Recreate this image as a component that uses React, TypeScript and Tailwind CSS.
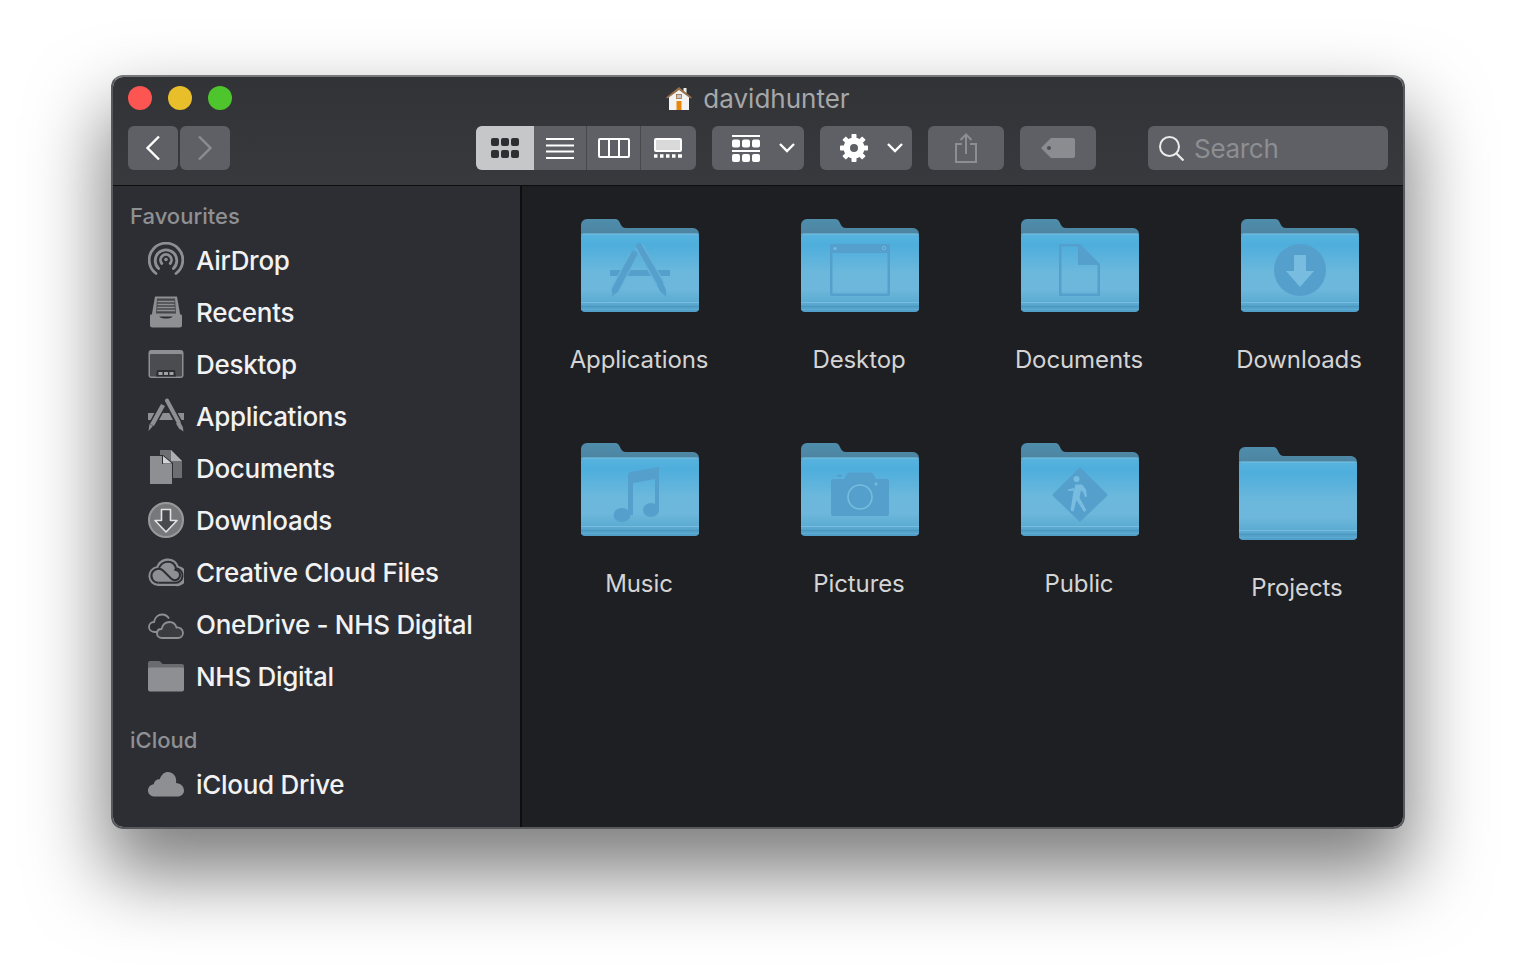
import { useId } from "react";
import type { ReactNode } from "react";

const gray = "#8e8f92";

function AirDropIcon() {
  return (
    <svg viewBox="0 0 36 36" className="w-9 h-9" fill="none" stroke={gray}>
      <path d="M8 31.500A16.800 16.800 0 1 1 28 31.500" strokeWidth="2.800" strokeLinecap="round" />
      <path d="M10.600 26.500A10.800 10.800 0 1 1 25.400 26.500" strokeWidth="2.800" strokeLinecap="round" />
      <path d="M13.800 21.500A5.500 5.500 0 1 1 22.200 21.500" strokeWidth="2.800" strokeLinecap="round" />
      <circle cx="18" cy="17.500" r="1.800" fill={gray} stroke="none" />
    </svg>
  );
}

function RecentsIcon() {
  return (
    <svg viewBox="0 0 36 36" className="w-9 h-9">
      <path d="M7 2.500h22l3.500 20H3.500z" fill={gray} />
      <path d="M9 4.500h18l1 15H8z" fill="#46474b" />
      <path d="M9.500 7.500h17M9.500 10.500h17M9.200 13.500h17.600M9 16.500h18" stroke={gray} strokeWidth="1.600" />
      <path d="M2 21.500a1 1 0 0 1 1-1h7.500c1 3 2.500 4 7.500 4s6.500-1 7.500-4H33a1 1 0 0 1 1 1V31a2.500 2.500 0 0 1-2.500 2.500h-27A2.500 2.500 0 0 1 2 31z" fill={gray} />
    </svg>
  );
}

function DesktopIcon() {
  return (
    <svg viewBox="0 0 36 36" className="w-9 h-9">
      <rect x="0.500" y="4" width="35" height="28" rx="3" fill={gray} />
      <rect x="2" y="8" width="32" height="22.500" rx="1" fill="#4b4c50" />
      <path d="M8 30.500l1-6.500h18l1 6.500z" fill="#2c2d31" />
      <rect x="10.500" y="26" width="4" height="3" fill="#a0a1a4" />
      <rect x="16" y="26" width="4" height="3" fill="#a0a1a4" />
      <rect x="21.500" y="26" width="4" height="3" fill="#a0a1a4" />
    </svg>
  );
}

function ApplicationsIcon() {
  return (
    <svg viewBox="0 0 36 36" className="w-9 h-9" fill="none">
      <path d="M0 15h36v7H0z" fill={gray} />
      <path d="M15 7L3 29" stroke="#2d2e33" strokeWidth="7.500" />
      <path d="M19 3l14 26" stroke="#2d2e33" strokeWidth="7.500" />
      <path d="M15 7L4 27" stroke={gray} strokeWidth="4.500" />
      <path d="M1.500 26l3.500 2-4.500 5z" fill={gray} />
      <path d="M19 2.500L30.500 24" stroke={gray} strokeWidth="4" strokeLinecap="round" />
      <path d="M28 25.500l3.800-2 3 5.500.700 4.500-4.500-3z" fill={gray} />
    </svg>
  );
}

function DocumentsIcon() {
  return (
    <svg viewBox="0 0 36 36" className="w-9 h-9">
      <path d="M12 0h11l11 11v17H25V13L15 5h-3z" fill="#6d6e72" />
      <path d="M23 0l11 11H23z" fill="#aeafb1" />
      <path d="M2 6h12v8h10v20H2z" fill={gray} />
      <path d="M15 6l9 7.500h-9z" fill="#d2d2d3" />
    </svg>
  );
}

function DownloadsIcon() {
  return (
    <svg viewBox="0 0 36 36" className="w-9 h-9">
      <circle cx="18" cy="18" r="17" fill="#77787b" stroke="#98999b" strokeWidth="2" />
      <path d="M13.500 7.500h9v11h6.500L18 30 7 18.500h6.500z" fill="#48494d" stroke="#e3e3e4" strokeWidth="1.600" strokeLinejoin="round" />
    </svg>
  );
}

function CreativeCloudIcon() {
  return (
    <svg viewBox="0 0 36 36" className="w-9 h-9" fill="none">
      <path d="M10 32a10 10 0 0 1-1.500-19.800C10.500 7 15 4.500 20 4.500c5 0 9 2.800 10.500 7.500A10 10 0 0 1 27 32z" fill={gray} />
      <path d="M10.500 28.800a7 7 0 1 1 4.800-12l8 8a5.200 5.200 0 1 0 3-9" stroke="#2d2e33" strokeWidth="2" />
      <path d="M11 13.800C13 9.800 16 7.800 20 7.800c4 0 7 2.500 8 6.500a7.200 7.200 0 0 1-1.500 14.500H10.500" stroke="#2d2e33" strokeWidth="2" />
    </svg>
  );
}

function OneDriveIcon() {
  return (
    <svg viewBox="0 0 36 36" className="w-9 h-9" fill="none" stroke={gray} strokeWidth="1.800">
      <path d="M11 26H6.500C3 26 1 23.500 1 21c0-3 2.300-5 5-5 .8-5 4.500-7.500 8-7.500 3 0 5.500 1.500 7 4" />
      <path d="M14 32c-3 0-5-2-5-4.500 0-2.800 2-4.500 4.500-4.500C14.500 19 17.500 16 21.500 16c3.500 0 6 2 7 5.500 3.500-.5 6.500 2 6.500 5.300 0 3-2.300 5.200-5 5.200z" fill="#3b3c40" />
    </svg>
  );
}

function SidebarFolderIcon() {
  return (
    <svg viewBox="0 0 36 36" className="w-9 h-9">
      <path d="M0 5a2 2 0 0 1 2-2h9c2 0 2.500 3 4 3h19a2 2 0 0 1 2 2v3H0z" fill="#6a6b6f" />
      <path d="M0 11a1.500 1.500 0 0 1 1.500-1.500h33A1.500 1.500 0 0 1 36 11v20.500a2 2 0 0 1-2 2H2a2 2 0 0 1-2-2z" fill={gray} />
    </svg>
  );
}

function CloudIcon() {
  return (
    <svg viewBox="0 0 36 36" className="w-9 h-9">
      <path d="M6.500 30.500C3 30.500 0 28 0 24.500c0-3.300 2.400-6 5.700-6.300C6.500 14.500 9 13 11.800 13.300 13.300 8.500 16.500 6 20 6c4.600 0 8 3.600 8.200 8.500 0 1-.1 1.700-.2 2.500 4.400.3 8 3.200 8 7.500 0 3.500-2.800 6-6.500 6z" fill={gray} />
    </svg>
  );
}

function Folder({ children }: { children?: ReactNode }) {
  const id = useId();
  return (
    <svg viewBox="0 0 118 94" className="w-[118px] h-[94px]">
      <defs>
        <linearGradient id={`${id}b`} x1="0" y1="0" x2="0" y2="1">
          <stop offset="0" stopColor="#4f8dab" />
          <stop offset="1" stopColor="#4a7f9b" />
        </linearGradient>
        <linearGradient id={`${id}f`} x1="0" y1="0" x2="0" y2="1">
          <stop offset="0" stopColor="#58b3de" />
          <stop offset="0.14" stopColor="#4eaedc" />
          <stop offset="0.5" stopColor="#6cb8dc" />
          <stop offset="0.72" stopColor="#6cb7db" />
          <stop offset="0.86" stopColor="#5dacd3" />
          <stop offset="1" stopColor="#509fc9" />
        </linearGradient>
      </defs>
      <path d="M0 6a6 6 0 0 1 6-6h28c3 0 4 2 5 4 1 3 3 5 6 5h67a6 6 0 0 1 6 6v10H0z" fill={`url(#${id}b)`} />
      <rect x="0" y="15" width="118" height="78" rx="4" fill={`url(#${id}f)`} />
      <path d="M0 16a4 4 0 0 1 4-1h110a4 4 0 0 1 4 1" stroke="#7cc4e6" fill="none" strokeWidth="1" />
      <path d="M0 83.500h118" stroke="#79bcdd" strokeWidth="1" />
      <path d="M0 87.500h118" stroke="#4b97c0" strokeWidth="1.500" />
      <path d="M0 90.500h118" stroke="#5ca9d2" strokeWidth="1" />
      {children}
    </svg>
  );
}

const glyph = "#559fcd";
const glyphLight = "#78bde0";

const folders: { name: string; glyph?: ReactNode }[] = [
  {
    name: "Applications",
    glyph: (
      <g>
        <rect x="29" y="51" width="60" height="6" fill={glyph} />
        <path d="M53 35L34 71" stroke="#64b3da" strokeWidth="9" />
        <path d="M58 27l22 39" stroke="#64b3da" strokeWidth="9" />
        <path d="M53 35L34 71" stroke={glyph} strokeWidth="6.500" strokeLinecap="round" />
        <path d="M31 78l.500-9 5.500 3z" fill={glyph} />
        <path d="M58 27l21 37" stroke={glyph} strokeWidth="6" strokeLinecap="round" />
        <path d="M76 66l5.500-3 3.500 8 .500 7-6-5z" fill={glyph} />
      </g>
    ),
  },
  {
    name: "Desktop",
    glyph: (
      <g>
        <path d="M31 25h56a2 2 0 0 1 2 2v48a2 2 0 0 1-2 2H31a2 2 0 0 1-2-2V27a2 2 0 0 1 2-2zM31.500 34v40.500h55V34z" fill={glyph} fillRule="evenodd" />
        <circle cx="34" cy="29.500" r="1.600" fill={glyphLight} />
        <circle cx="83" cy="29" r="1.700" fill="none" stroke={glyphLight} strokeWidth="0.800" />
      </g>
    ),
  },
  {
    name: "Documents",
    glyph: (
      <g>
        <path d="M38 25h21l20 20v32H38zM40.500 27.500v47h36V46H57V27.500z" fill={glyph} fillRule="evenodd" />
        <path d="M59 27l18 17H59z" fill={glyph} />
      </g>
    ),
  },
  {
    name: "Downloads",
    glyph: (
      <g>
        <circle cx="59" cy="51" r="26" fill={glyph} />
        <path d="M53 36h12v16h8L59 68 45 52h8z" fill={glyphLight} />
      </g>
    ),
  },
  {
    name: "Music",
    glyph: (
      <g fill={glyph}>
        <path d="M47 32a3 3 0 0 1 2.500-3L77 24a1 1 0 0 1 1 1v42h-4V36l-22 4v32h-5z" />
        <ellipse cx="41" cy="72" rx="8.500" ry="7" />
        <ellipse cx="70" cy="67" rx="8" ry="7" />
      </g>
    ),
  },
  {
    name: "Pictures",
    glyph: (
      <g>
        <path d="M32 36h11l3-5a3 3 0 0 1 2.500-1.500h21A3 3 0 0 1 72 31l3 5h11a2 2 0 0 1 2 2v33a2 2 0 0 1-2 2H32a2 2 0 0 1-2-2V38a2 2 0 0 1 2-2z" fill={glyph} />
        <rect x="36" y="31.500" width="5" height="2.500" rx="1" fill={glyph} />
        <circle cx="59" cy="54" r="12" fill="none" stroke={glyphLight} strokeWidth="1.600" />
        <circle cx="75" cy="41" r="1.500" fill={glyphLight} />
      </g>
    ),
  },
  {
    name: "Public",
    glyph: (
      <g>
        <path d="M59 24l27 27a1.500 1.500 0 0 1 0 2L59 79 32 53a1.500 1.500 0 0 1 0-2z" fill={glyph} />
        <circle cx="55.500" cy="36" r="3" fill={glyphLight} />
        <path d="M47 48l6-.5 1.500-6h6.500l4 5 1 7-2 .5-2-5-2-1.500-1.500 7 7 13-2.500 1.500-7.500-12-3 11.500-3-1 3-19 .5-3.500-6 1.500z" fill={glyphLight} />
      </g>
    ),
  },
];

const favourites: { name: string; icon: ReactNode }[] = [
  { name: "AirDrop", icon: <AirDropIcon /> },
  { name: "Recents", icon: <RecentsIcon /> },
  { name: "Desktop", icon: <DesktopIcon /> },
  { name: "Applications", icon: <ApplicationsIcon /> },
  { name: "Documents", icon: <DocumentsIcon /> },
  { name: "Downloads", icon: <DownloadsIcon /> },
  { name: "Creative Cloud Files", icon: <CreativeCloudIcon /> },
  { name: "OneDrive - NHS Digital", icon: <OneDriveIcon /> },
  { name: "NHS Digital", icon: <SidebarFolderIcon /> },
];

function SidebarItem({ name, icon }: { name: string; icon: ReactNode }) {
  return (
    <div className="flex items-center h-[52px] pl-[35px] gap-[12px] text-[26px] font-[450] tracking-[-0.3px] text-[#f2f2f3]">
      {icon}
      <span>{name}</span>
    </div>
  );
}

function Chevron() {
  return (
    <svg width="16" height="10" viewBox="0 0 16 10" fill="none" stroke="#fff" strokeWidth="2.400">
      <path d="M1 1l7 7 7-7" />
    </svg>
  );
}

const toolBtn = "h-11 rounded-[6px] bg-[#5f6065] flex items-center justify-center";

function Toolbar() {
  return (
    <div className="flex items-center h-11">
      <div className="flex gap-0.5">
        <div className={`${toolBtn} w-[50px]`}>
          <svg width="16" height="26" viewBox="0 0 16 26" fill="none" stroke="#fff" strokeWidth="2.400">
            <path d="M14 1.500L2.500 13 14 24.500" />
          </svg>
        </div>
        <div className={`${toolBtn} w-[50px]`}>
          <svg width="16" height="26" viewBox="0 0 16 26" fill="none" stroke="#8c8d91" strokeWidth="2.400">
            <path d="M2 1.500L13.500 13 2 24.500" />
          </svg>
        </div>
      </div>

      <div className="ml-[246px] flex h-11 w-[220px] rounded-[6px] overflow-hidden bg-[#5f6065]">
        <div className="w-[58px] bg-[#c6c7c9] flex items-center justify-center">
          <div className="grid grid-cols-3 gap-x-0.5 gap-y-1">
            {[0, 1, 2, 3, 4, 5].map((i) => (
              <div key={i} className="w-2 h-2 rounded-[2px] bg-[#2e2f33]" />
            ))}
          </div>
        </div>
        <div className="w-[53px] flex items-center justify-center border-r border-[#47484c]">
          <svg width="28" height="21" viewBox="0 0 28 21" stroke="#fff" strokeWidth="2">
            <path d="M0 1h28M0 7.500h28M0 13.500h28M0 20h28" />
          </svg>
        </div>
        <div className="w-[54px] flex items-center justify-center border-r border-[#47484c]">
          <svg width="32" height="20" viewBox="0 0 32 20" fill="none" stroke="#fff" strokeWidth="2">
            <rect x="1" y="1" width="30" height="18" rx="1" />
            <path d="M11 1v18M21 1v18" />
          </svg>
        </div>
        <div className="flex-1 flex items-center justify-center pr-0.5">
          <svg width="28" height="21" viewBox="0 0 28 21">
            <rect x="1" y="1" width="26" height="12" rx="1" fill="#d9d9da" stroke="#fff" strokeWidth="2" />
            <path d="M0 18h3.500M6 18h3.500M12 18h3.500M18 18h3.500M24 18h4" stroke="#fff" strokeWidth="3.500" />
          </svg>
        </div>
      </div>

      <div className={`${toolBtn} ml-4 w-[92px] gap-[19px] pl-[11px]`}>
        <svg width="28" height="27" viewBox="0 0 28 27" fill="#fff">
          <path d="M0 1h28M0 16h28" stroke="#fff" strokeWidth="2" />
          <rect x="0" y="4.500" width="8" height="8" rx="2" />
          <rect x="10" y="4.500" width="8" height="8" rx="2" />
          <rect x="20" y="4.500" width="8" height="8" rx="2" />
          <rect x="0" y="19" width="8" height="8" rx="2" />
          <rect x="10" y="19" width="8" height="8" rx="2" />
          <rect x="20" y="19" width="8" height="8" rx="2" />
        </svg>
        <Chevron />
      </div>

      <div className={`${toolBtn} ml-4 w-[92px] gap-[19px] pl-[11px]`}>
        <svg width="28" height="28" viewBox="0 0 28 28" fill="#fff">
          <path d="M14 3.500a10.500 10.500 0 1 0 0 21 10.500 10.500 0 0 0 0-21zm0 6.500a4 4 0 1 1 0 8 4 4 0 0 1 0-8z" fillRule="evenodd" />
          {[0, 45, 90, 135, 180, 225, 270, 315].map((a) => (
            <rect key={a} x="11.500" y="0" width="5" height="6" rx="0.800" transform={`rotate(${a} 14 14)`} />
          ))}
        </svg>
        <Chevron />
      </div>

      <div className={`${toolBtn} ml-4 w-[76px]`}>
        <svg width="22" height="30" viewBox="0 0 22 30" fill="none" stroke="#8d8e92" strokeWidth="2">
          <path d="M7 11H1v18h20V11h-6M11 21V1.500M5.500 7L11 1.500 16.500 7" />
        </svg>
      </div>

      <div className={`${toolBtn} ml-4 w-[76px]`}>
        <svg width="34" height="20" viewBox="0 0 34 20">
          <path d="M10 0h22a2 2 0 0 1 2 2v16a2 2 0 0 1-2 2H10L0 10z" fill="#8b8c90" />
          <circle cx="8" cy="10" r="2" fill="#4f5054" />
        </svg>
      </div>

      <div className={`${toolBtn} ml-[52px] w-60 justify-start pl-[11px] gap-[10px]`}>
        <svg width="25" height="25" viewBox="0 0 25 25" fill="none" stroke="#ebebec" strokeWidth="2">
          <circle cx="10.500" cy="10.500" r="9.500" />
          <path d="M17.500 17.500L24.500 24.500" strokeWidth="2.200" />
        </svg>
        <span className="text-[26px] tracking-[-0.3px] text-[#8d8e92]">Search</span>
      </div>
    </div>
  );
}

function HomeIcon() {
  return (
    <svg width="26" height="25" viewBox="0 0 26 25">
      <path d="M3 24V10L13 3l10 7v14z" fill="#f3f3f2" />
      <rect x="17.500" y="2" width="3" height="5" fill="#f0f0ee" />
      <path d="M0 11.500L13 1l13 10.500-1.500 1L13 4 1.500 12.500z" fill="#98714a" />
      <rect x="10.500" y="15" width="5" height="9" fill="#e8860c" />
      <rect x="10.500" y="8.500" width="5" height="4" fill="#c9c4bb" stroke="#98714a" strokeWidth="0.800" />
    </svg>
  );
}

export default function App() {
  return (
    <div
      className="h-[976px] bg-white pl-[111px] pt-[75px] overflow-hidden"
      style={{ fontFamily: "Inter, sans-serif" }}
    >
      <div className="w-[1294px] h-[754px] flex flex-col rounded-[12px] overflow-hidden border-2 border-[#58595c] border-t-[#77787b] shadow-[0_40px_76px_6px_rgba(0,0,0,0.5)]">
        <header className="h-[109px] shrink-0 px-[15px] bg-gradient-to-b from-[#323337] to-[#38393d] border-b border-[#0e0e10]">
          <div className="grid grid-cols-[1fr_auto_1fr] items-center h-[42px] mb-[7px]">
            <div className="flex gap-4">
              <div className="w-6 h-6 rounded-full bg-[#fd5551]" />
              <div className="w-6 h-6 rounded-full bg-[#e8bf2a]" />
              <div className="w-6 h-6 rounded-full bg-[#4fc52d]" />
            </div>
            <div className="flex items-center gap-[11px] text-[26px] text-[#a6a7a9]">
              <HomeIcon />
              <span>davidhunter</span>
            </div>
          </div>
          <Toolbar />
        </header>

        <div className="flex flex-1 min-h-0">
          <aside className="w-[407px] shrink-0 bg-[#2d2e33] pt-[15px]">
            <h2 className="pl-[17px] text-[22px] leading-[30px] font-medium text-[#8f9093] h-[33px]">Favourites</h2>
            {favourites.map((f) => (
              <SidebarItem key={f.name} name={f.name} icon={f.icon} />
            ))}
            <h2 className="pl-[17px] mt-[23px] text-[22px] leading-[30px] font-medium text-[#8f9093] h-[33px]">iCloud</h2>
            <SidebarItem name="iCloud Drive" icon={<CloudIcon />} />
          </aside>

          <main className="flex-1 bg-[#1e1f23] border-l-2 border-[#0e0e10] pl-[8px] pt-[33px]">
            <div className="grid grid-cols-[repeat(4,220px)] auto-rows-[224px]">
              {folders.map((f) => (
                <div key={f.name} className="flex flex-col items-center">
                  <Folder>{f.glyph}</Folder>
                  <span className="mt-[32px] -ml-0.5 text-[24px] leading-[30px] tracking-[-0.1px] text-[#d4d4d5]">{f.name}</span>
                </div>
              ))}
              <div className="flex flex-col items-center mt-1 -ml-1">
                <Folder />
                <span className="mt-[32px] -ml-0.5 text-[24px] leading-[30px] tracking-[-0.1px] text-[#d4d4d5]">Projects</span>
              </div>
            </div>
          </main>
        </div>
      </div>
    </div>
  );
}
